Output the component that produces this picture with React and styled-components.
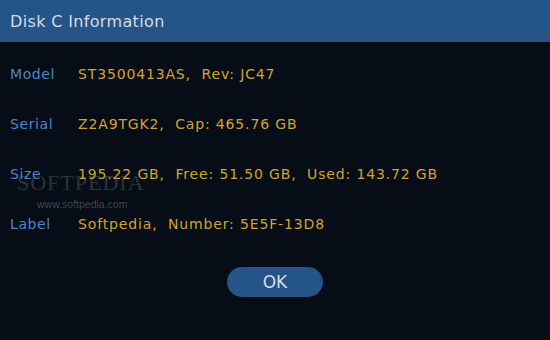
import React from 'react';
import styled, { createGlobalStyle } from 'styled-components';

const GlobalStyle = createGlobalStyle`
  html, body { margin: 0; padding: 0; background: #060d17; }
  body { font-family: "DejaVu Sans", Verdana, sans-serif; }
`;

const rows = [
  { label: 'Model', value: 'ST3500413AS,  Rev: JC47' },
  { label: 'Serial', value: 'Z2A9TGK2,  Cap: 465.76 GB' },
  { label: 'Size', value: '195.22 GB,  Free: 51.50 GB,  Used: 143.72 GB' },
  { label: 'Label', value: 'Softpedia,  Number: 5E5F-13D8' },
];

function App() {
  return (
    <>
      <GlobalStyle />
      <Window>
        <TitleBar>Disk C Information</TitleBar>
        <Body>
          {rows.map(row => (
            <Row key={row.label}>
              <Label>{row.label}</Label>
              <Value>{row.value}</Value>
            </Row>
          ))}
          <Watermark>
            <Mark>SOFTPEDIA</Mark>
            <Url>www.softpedia.com</Url>
          </Watermark>
        </Body>
        <Footer>
          <OkButton>OK</OkButton>
        </Footer>
      </Window>
    </>
  );
}

export default App;

const Window = styled.div`
width: 550px;
height: 340px;
background: #060d17;
display: flex;
flex-direction: column;
overflow: hidden;`

const TitleBar = styled.div`
height: 42px;
background: #245488;
color: #d6dce4;
font-size: 16px;
letter-spacing: 0.35px;
display: flex;
align-items: center;
padding-left: 10px;`

const Body = styled.div`
position: relative;
padding-top: 7px;
display: flex;
flex-direction: column;`

const Row = styled.div`
height: 50px;
display: flex;
align-items: center;
font-size: 14px;`

const Label = styled.div`
width: 68px;
padding-left: 10px;
color: #4a86c8;
letter-spacing: 0.6px;`

const Value = styled.div`
color: #d4a32c;
white-space: pre;
letter-spacing: 0.85px;`

const Watermark = styled.div`
position: absolute;
left: 17px;
top: 128px;
pointer-events: none;`

const Mark = styled.div`
font-family: "Liberation Serif", serif;
font-size: 22px;
letter-spacing: 1px;
color: rgba(140, 145, 150, 0.3);`

const Url = styled.div`
margin-top: 2px;
margin-left: 20px;
font-family: "Liberation Sans", sans-serif;
font-size: 10.5px;
color: rgba(140, 145, 150, 0.45);`

const Footer = styled.div`
display: flex;
justify-content: center;
padding-top: 18px;`

const OkButton = styled.button`
width: 96px;
height: 30px;
border: none;
border-radius: 15px;
background: #245488;
color: #d6dce4;
font-family: "DejaVu Sans", Verdana, sans-serif;
font-size: 17px;`
